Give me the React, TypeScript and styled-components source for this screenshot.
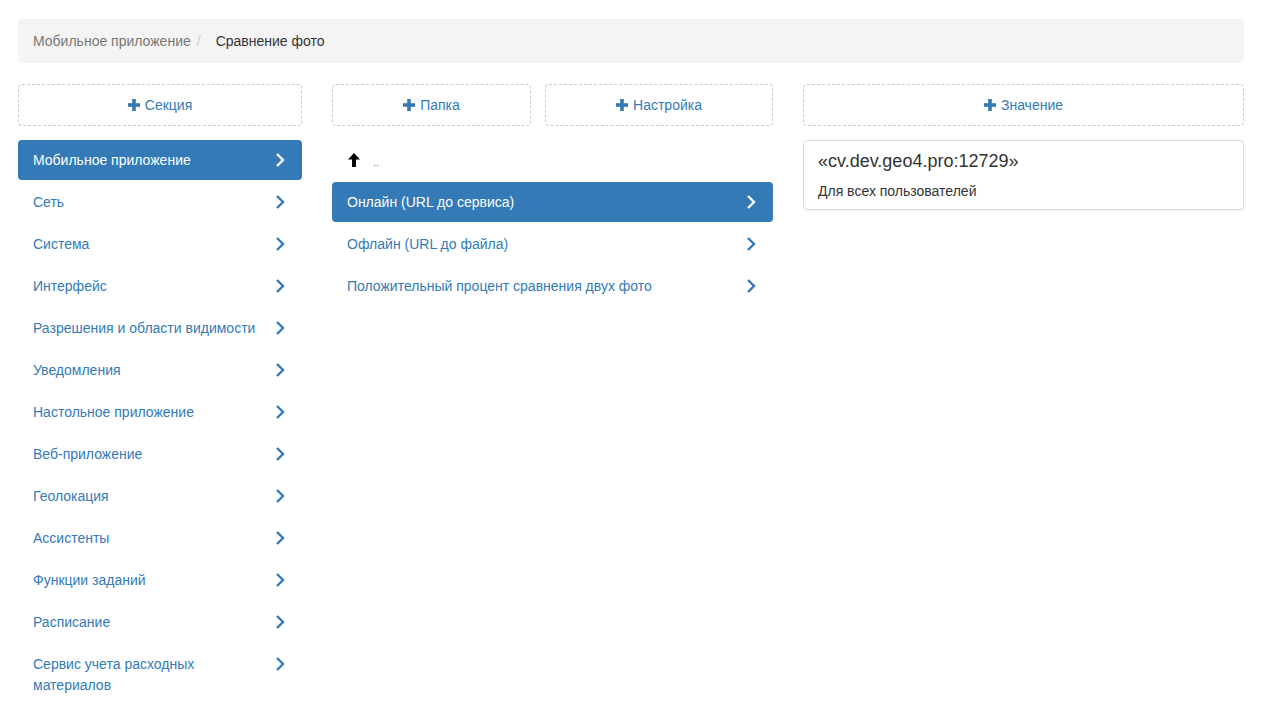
import React from "react";
import styled, { createGlobalStyle } from "styled-components";

const GlobalStyle = createGlobalStyle`
  body {
    margin: 0;
    font-family: "Liberation Sans", Arial, sans-serif;
    font-size: 14px;
    line-height: 20px;
    color: #333;
    background: #fff;
  }
  * { box-sizing: border-box; }
`;

const Page = styled.div`
  padding: 19px 18px 0;
`;

const Breadcrumb = styled.div`
  background: #f4f4f4;
  border-radius: 4px;
  padding: 12px 15px 12px;
  height: 44px;
  display: flex;
  align-items: center;
  color: #777;
`;

const Divider = styled.span`
  color: #ccc;
  padding: 0 15px 0 6px;
`;

const Current = styled.span`
  color: #333;
`;

const Columns = styled.div`
  display: grid;
  grid-template-columns: 284px 1fr 1fr;
  column-gap: 30px;
  margin-top: 21px;
`;

const Column = styled.div`
  display: flex;
  flex-direction: column;
`;

const ButtonRow = styled.div`
  display: grid;
  grid-template-columns: 199px 1fr;
  column-gap: 14px;
`;

const AddButton = styled.button`
  height: 42px;
  border: 1px dashed #ccc;
  border-radius: 4px;
  background: #fff;
  color: #337ab7;
  font-family: inherit;
  font-size: 14px;
  display: flex;
  align-items: center;
  justify-content: center;
  gap: 5px;
  cursor: pointer;
  padding: 0;
`;

const List = styled.div`
  margin-top: 14px;
  display: flex;
  flex-direction: column;
  gap: 2px;
`;

const Item = styled.div<{ $active?: boolean }>`
  display: flex;
  align-items: flex-start;
  padding: 10px 16px 9px 15px;
  border-radius: 4px;
  color: ${(p) => (p.$active ? "#fff" : "#337ab7")};
  background: ${(p) => (p.$active ? "#337ab7" : "transparent")};
  cursor: pointer;
  line-height: 21px;
  min-height: 40px;
`;

const ItemText = styled.span`
  flex: 1;
  padding-right: 10px;
`;

const UpRow = styled.div`
  display: flex;
  align-items: center;
  height: 40px;
  padding-left: 15px;
  gap: 12px;
`;

const Dots = styled.span`
  color: #777;
  font-size: 11px;
  margin-top: 4px;
`;

const Card = styled.div`
  margin-top: 14px;
  border: 1px solid #ddd;
  border-radius: 4px;
  box-shadow: 0 1px 2px rgba(0, 0, 0, 0.06);
  padding: 10px 14px 8px;
`;

const CardTitle = styled.h4`
  margin: 0 0 10px;
  font-size: 18px;
  font-weight: normal;
  line-height: 20px;
  color: #333;
`;

const CardText = styled.p`
  margin: 0;
  color: #333;
`;

const Plus = () => (
  <svg width="12" height="12" viewBox="0 0 12 12">
    <rect x="4.2" y="0" width="3.6" height="12" fill="#337ab7" />
    <rect x="0" y="4.2" width="12" height="3.6" fill="#337ab7" />
  </svg>
);

const Chevron = ({ color }: { color: string }) => (
  <svg width="12" height="16" viewBox="0 0 12 16" style={{ marginTop: 2 }}>
    <polyline
      points="3,2 9,8 3,14"
      fill="none"
      stroke={color}
      strokeWidth="2.4"
      strokeLinecap="butt"
    />
  </svg>
);

const ArrowUp = () => (
  <svg width="14" height="14" viewBox="0 0 14 14">
    <polygon points="7,0 13,6.5 9,6.5 9,14 5,14 5,6.5 1,6.5" fill="#000" />
  </svg>
);

const sections = [
  "Мобильное приложение",
  "Сеть",
  "Система",
  "Интерфейс",
  "Разрешения и области видимости",
  "Уведомления",
  "Настольное приложение",
  "Веб-приложение",
  "Геолокация",
  "Ассистенты",
  "Функции заданий",
  "Расписание",
  "Сервис учета расходных материалов",
];

const settings = [
  "Онлайн (URL до сервиса)",
  "Офлайн (URL до файла)",
  "Положительный процент сравнения двух фото",
];

const App = () => {
  return (
    <Page>
      <GlobalStyle />
      <Breadcrumb>
        <span>Мобильное приложение</span>
        <Divider>/</Divider>
        <Current>Сравнение фото</Current>
      </Breadcrumb>
      <Columns>
        <Column>
          <AddButton>
            <Plus />
            Секция
          </AddButton>
          <List>
            {sections.map((s, i) => (
              <Item key={s} $active={i === 0}>
                <ItemText>{s}</ItemText>
                <Chevron color={i === 0 ? "#fff" : "#337ab7"} />
              </Item>
            ))}
          </List>
        </Column>
        <Column>
          <ButtonRow>
            <AddButton>
              <Plus />
              Папка
            </AddButton>
            <AddButton>
              <Plus />
              Настройка
            </AddButton>
          </ButtonRow>
          <List>
            <UpRow>
              <ArrowUp />
              <Dots>..</Dots>
            </UpRow>
            {settings.map((s, i) => (
              <Item key={s} $active={i === 0}>
                <ItemText>{s}</ItemText>
                <Chevron color={i === 0 ? "#fff" : "#337ab7"} />
              </Item>
            ))}
          </List>
        </Column>
        <Column>
          <AddButton>
            <Plus />
            Значение
          </AddButton>
          <Card>
            <CardTitle>«cv.dev.geo4.pro:12729»</CardTitle>
            <CardText>Для всех пользователей</CardText>
          </Card>
        </Column>
      </Columns>
    </Page>
  );
};

export default App;
